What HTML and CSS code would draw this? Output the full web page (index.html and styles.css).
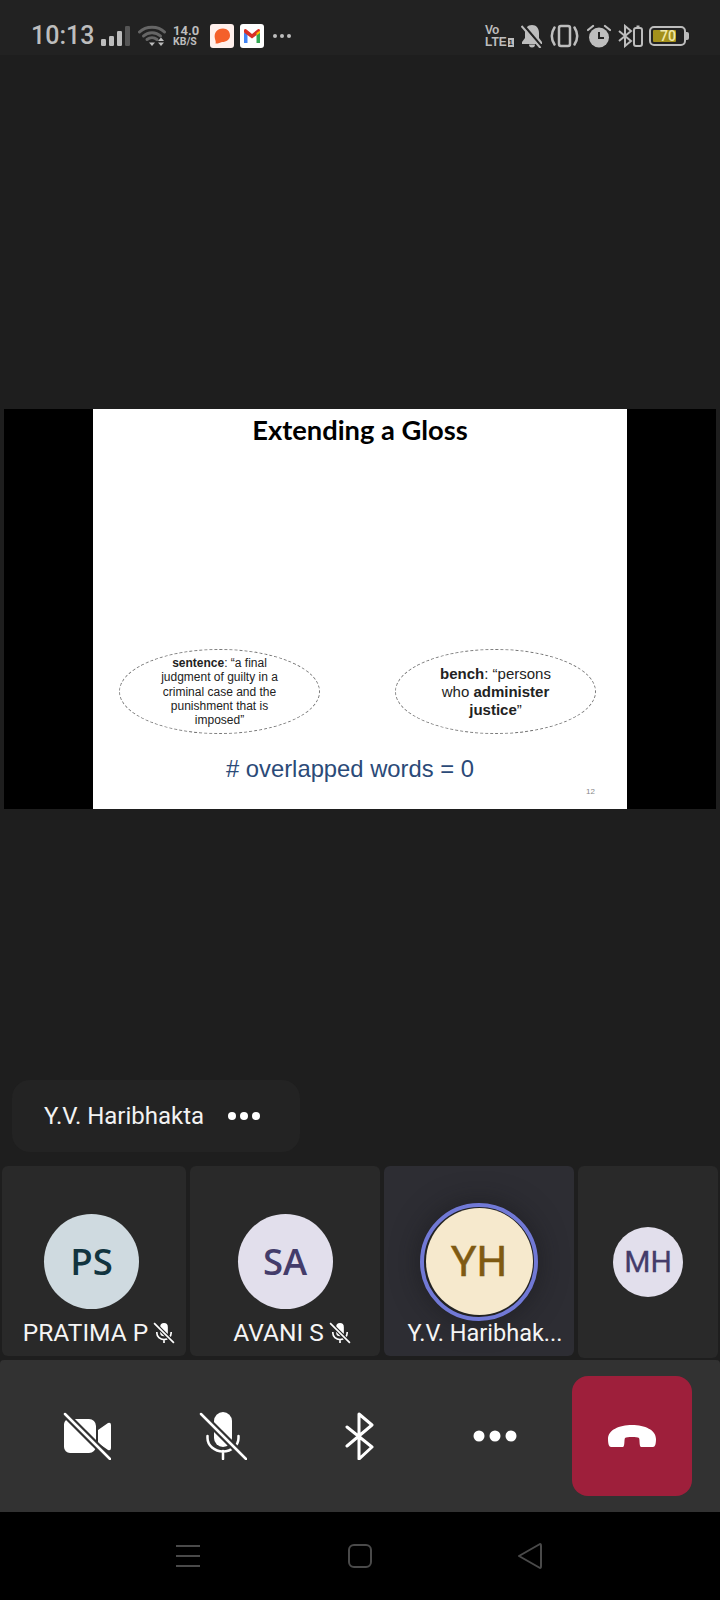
FILE: index.html
```html
<!DOCTYPE html>
<html lang="en">
<head>
<meta charset="utf-8">
<title>Meeting</title>
<link rel="stylesheet" href="styles.css">
</head>
<body>
<div class="phone">
  <header class="status">
    <div class="status-left">
      <span class="time">10:13</span>
      <svg class="signal" width="30" height="22" viewBox="0 0 30 22"><rect x="0" y="14" width="5" height="7" rx="1.2" fill="#bdbdbd"/><rect x="8" y="11" width="5" height="10" rx="1.2" fill="#bdbdbd"/><rect x="16" y="6" width="5" height="15" rx="1.2" fill="#bdbdbd"/><rect x="24" y="1" width="5" height="20" rx="1.2" fill="#555"/></svg>
      <svg class="wifi" width="29" height="22" viewBox="0 0 29 22"><g fill="none" stroke="#666" stroke-width="3" stroke-linecap="round"><path d="M1.500 7C8 .5 20 .5 26.500 7"/><path d="M5.500 11C10 6.500 18 6.500 22.500 11"/><path d="M9 14.500C12 12 16 12 19 14.500"/></g><path d="M11 17.500h6l-3 3.500z" fill="#bdbdbd"/><path d="M23 12.500l3 3.500h-6zM23 21l3-3.500h-6z" fill="#bdbdbd"/></svg>
      <div class="speed"><span class="speed-num">14.0</span><span class="speed-unit">KB/S</span></div>
      <span class="app app-peach"><svg width="24" height="24" viewBox="0 0 24 24"><path d="M13 4.500C17.500 4.500 20 7.500 20 11.500 20 15.500 16.500 18 12 18 10 18.500 7.500 20 5.500 19.500 6 18 5.500 16.500 5 15 3.500 9 7 4.500 13 4.500z" fill="#f4602a"/></svg></span>
      <span class="app"><svg width="24" height="24" viewBox="0 0 24 24"><path d="M4 9v10h3.500V9z" fill="#4285f4"/><path d="M16.500 9v10H20V9z" fill="#34a853"/><path d="M4 8.500 12 14.500 20 8.500V6.500C20 5 18.500 4.500 17.500 5.500L12 10 6.500 5.500C5.500 4.500 4 5 4 6.500z" fill="#d93025"/><path d="M16.500 9 20 6.500V9l-3.500 2.500z" fill="#fbbc04"/></svg></span>
      <span class="more-dots"><i></i><i></i><i></i></span>
    </div>
    <div class="status-right">
      <div class="volte"><span>Vo</span><span>LTE<b class="sim">1</b></span></div>
      <svg class="ic-bell" width="22" height="24" viewBox="0 0 22 24"><path d="M11 1c4.500 0 7 3.500 7 8v5l3 4v2H1v-2l3-4V9c0-4.500 2.500-8 7-8zM8 20.500h6a3 3 0 0 1-6 0z" fill="#bdbdbd"/><path d="M2 .5 21 23" stroke="#222" stroke-width="2.500"/><path d="M.5 2 19.500 24" stroke="#bdbdbd" stroke-width="2"/></svg>
      <svg class="ic-vib" width="29" height="24" viewBox="0 0 29 24"><g fill="none" stroke="#bdbdbd" stroke-width="2.500"><rect x="9" y="2" width="11" height="20" rx="2"/><path d="M4.500 3.500C1 9 1 15 4.500 20.500M24.500 3.500C28 9 28 15 24.500 20.500" stroke-linecap="round"/></g></svg>
      <svg class="ic-alarm" width="24" height="24" viewBox="0 0 24 24"><circle cx="12" cy="13.500" r="10" fill="#bdbdbd"/><path d="M12 8v6h5" fill="none" stroke="#222" stroke-width="2"/><path d="M1 6 6 2M23 6 18 2" stroke="#bdbdbd" stroke-width="2.200" stroke-linecap="round"/></svg>
      <svg class="ic-bt" width="26" height="24" viewBox="0 0 26 24"><path d="M1 7l12 10-6 5V2l6 5L1 17" fill="none" stroke="#bdbdbd" stroke-width="2"/><rect x="16" y="4" width="8" height="18" rx="2" fill="none" stroke="#bdbdbd" stroke-width="2"/><rect x="18.500" y="1.500" width="3" height="2" fill="#bdbdbd"/></svg>
      <div class="battery"><span class="batt-fill">70</span></div>
    </div>
  </header>

  <main class="stage">
    <section class="video">
      <div class="slide">
        <h1 class="slide-title">Extending a Gloss</h1>
        <div class="glosses">
          <p class="gloss gloss-small"><b>sentence</b>: “a final<br>judgment of guilty in a<br>criminal case and the<br>punishment that is<br>imposed”</p>
          <p class="gloss gloss-large"><b>bench</b>: “persons<br>who <b>administer</b><br><b>justice</b>”</p>
        </div>
        <p class="overlap"># overlapped words = 0</p>
        <span class="page-no">12</span>
      </div>
    </section>

    <div class="presenter">
      <span class="presenter-name">Y.V. Haribhakta</span>
      <span class="pill-dots"><i></i><i></i><i></i></span>
    </div>

    <section class="tiles">
      <article class="tile tile-ps">
        <div class="slot"><span class="avatar av-ps">PS</span></div>
        <div class="name">PRATIMA P <svg class="mini-mic" width="22" height="22" viewBox="0 0 20 20"><use href="#mic"/></svg></div>
      </article>
      <article class="tile tile-sa">
        <div class="slot"><span class="avatar av-sa">SA</span></div>
        <div class="name">AVANI S <svg class="mini-mic" width="22" height="22" viewBox="0 0 20 20"><use href="#mic"/></svg></div>
      </article>
      <article class="tile tile-yh">
        <div class="slot"><span class="ring"><span class="avatar av-yh">YH</span></span></div>
        <div class="name">Y.V. Haribhak...</div>
      </article>
      <article class="tile tile-mh">
        <div class="slot"><span class="avatar av-mh">MH</span></div>
      </article>
    </section>

    <nav class="controls">
      <div class="ctl-group">
        <svg class="ctl" width="48" height="48" viewBox="0 0 48 48"><path d="M6 7h20a7 7 0 0 1 7 7v20a7 7 0 0 1-7 7H7a6 6 0 0 1-6-6V12a6 6 0 0 1 5-5zM35 18l10-7q3-1 3 2v23q0 3-3 2l-10-7z" fill="#fff"/><path d="M1 1 47 47" stroke="#323232" stroke-width="7"/><path d="M2 2 47 47" stroke="#fff" stroke-width="2.500" stroke-linecap="round"/></svg>
        <svg class="ctl" width="48" height="48" viewBox="0 0 48 48"><rect x="15" y="0" width="18" height="35" rx="9" fill="#fff"/><path d="M8.500 24v2a15 13 0 0 0 31 0v-2M24 39v8" fill="none" stroke="#fff" stroke-width="2.500" stroke-linecap="round"/><path d="M1 1 47 47" stroke="#323232" stroke-width="7"/><path d="M2 2 47 47" stroke="#fff" stroke-width="2.500" stroke-linecap="round"/></svg>
        <svg class="ctl" width="48" height="48" viewBox="0 0 48 48"><path d="M12 15 37 35 24 47V2l13 11L12 34" fill="none" stroke="#fff" stroke-width="3" stroke-linecap="round" stroke-linejoin="round"/></svg>
        <svg class="ctl" width="48" height="48" viewBox="0 0 48 48"><circle cx="8" cy="24" r="5.500" fill="#fff"/><circle cx="24" cy="24" r="5.500" fill="#fff"/><circle cx="40" cy="24" r="5.500" fill="#fff"/></svg>
      </div>
      <button class="hangup" type="button" aria-label="Leave"><svg width="48" height="22" viewBox="0 0 48 22"><path d="M0 14C0 5 11 0 24 0s24 5 24 14c0 5-1 8-3 8-4 0-10 1-12 0-2-1-1-7-2-9-1-1-4-1-7-1s-6 0-7 1c-1 2 0 8-2 9-2 1-8 0-12 0-2 0-3-3-3-8z" fill="#fff"/></svg></button>
    </nav>
  </main>

  <footer class="navbar">
    <svg width="24" height="24" viewBox="0 0 24 24"><path d="M0 2h24M0 12h24M0 22h24" stroke="#4a4a4a" stroke-width="2"/></svg>
    <svg width="24" height="24" viewBox="0 0 24 24"><rect x="1" y="1" width="22" height="22" rx="5" fill="none" stroke="#4a4a4a" stroke-width="2"/></svg>
    <svg class="nav-back" width="26" height="28" viewBox="0 0 26 28"><path d="M23 2 2 14l21 12q1 0 1-2V4q0-2-1-2z" fill="none" stroke="#4a4a4a" stroke-width="2" stroke-linejoin="round"/></svg>
  </footer>

  <svg class="defs" width="0" height="0"><defs><g id="mic"><rect x="6.500" y="1" width="7" height="12" rx="3.500" fill="#fff"/><path d="M3.500 9v1a6.500 6 0 0 0 13 0V9M10 16v3" fill="none" stroke="#fff" stroke-width="1.500"/><path d="M1 1 19 19" stroke="#292929" stroke-width="3.500"/><path d="M1 1 19 19" stroke="#fff" stroke-width="1.500"/></g></defs></svg>
</div>
</body>
</html>
```
FILE: styles.css
```css
* { box-sizing: border-box; }
html, body { margin: 0; padding: 0; background: #000; }
.phone {
  width: 720px; height: 1600px; overflow: hidden;
  display: flex; flex-direction: column;
  background: #1e1e1e;
  font-family: Roboto, "Liberation Sans", sans-serif;
  color: #fff;
}

/* status bar */
.status {
  height: 55px; flex: none;
  background: #222;
  display: flex; justify-content: space-between; align-items: flex-start;
  padding: 24px 34px 0 31px;
  color: #bdbdbd;
}
.status-left, .status-right { display: flex; align-items: center; height: 24px; }
.time { font-size: 25px; line-height: 24px; font-weight: 500; width: 70px; }
.signal { margin-right: 7px; }
.wifi { margin-right: 6px; }
.speed { display: flex; flex-direction: column; width: 37px; font-weight: 700; line-height: 11px; }
.speed-num { font-size: 13px; }
.speed-unit { font-size: 10.500px; }
.app { width: 24px; height: 24px; background: #fff; border-radius: 3px; display: block; margin-right: 6px; }
.app svg { display: block; }
.app-peach { background: #fff0ec; }
.more-dots { display: flex; gap: 3px; margin-left: 3px; }
.more-dots i { width: 4px; height: 4px; border-radius: 50%; background: #bdbdbd; }
.volte { display: flex; flex-direction: column; font-size: 12px; line-height: 12px; font-weight: 700; width: 36px; }
.volte span { font-family: "Liberation Sans", sans-serif; display: flex; align-items: center; }
.sim { font-size: 7px; line-height: 9px; background: #bdbdbd; color: #222; padding: 0 1px; margin-left: 1px; }
.ic-bell { margin-right: 7px; }
.ic-vib { margin-right: 8px; }
.ic-alarm { margin-right: 7px; }
.ic-bt { margin-right: 5px; }
.battery {
  width: 37px; height: 20px; border: 2px solid #bdbdbd; border-radius: 5px;
  padding: 2px; position: relative;
}
.battery::after {
  content: ""; position: absolute; right: -5px; top: 4px;
  width: 3px; height: 8px; background: #bdbdbd; border-radius: 0 2px 2px 0;
}
.batt-fill {
  display: block; width: 23px; height: 12px; background: #a3901c;
  font-size: 14px; line-height: 12px; font-weight: 500; text-align: right; color: #f1e8a8;
  border-radius: 1px;
}

/* stage */
.stage { flex: 1; display: flex; flex-direction: column; min-height: 0; }
.video {
  margin: 354px 4px 0; height: 400px; background: #000;
  display: flex; justify-content: center; flex: none;
}
.slide {
  width: 534px; height: 400px; background: #fff; color: #000;
  position: relative;
  display: flex; flex-direction: column; align-items: center;
  font-family: "Liberation Sans", Arial, sans-serif;
}
.slide-title {
  margin: 4px 0 0; font-family: Lato, sans-serif; font-weight: 700;
  font-size: 27.300px; line-height: 34px; height: 236px; color: #000;
}
.glosses { width: 100%; display: flex; gap: 75px; padding-left: 26px; }
.gloss {
  margin: 0; width: 201px; height: 85px; flex: none;
  border: 1px dashed #777; border-radius: 50%;
  text-align: center;
}
.gloss-small { font-size: 12px; line-height: 14.300px; padding-top: 6px; color: #222; }
.gloss-large { font-size: 15px; line-height: 18px; padding-top: 15px; color: #222; }
.overlap { margin: 20px 20px 0 0; font-size: 23.800px; line-height: 30px; color: #2b4a78; }
.page-no { position: absolute; right: 32px; top: 378px; font-size: 8px; color: #888; }

.presenter {
  margin: 271px 0 0 12px; width: 288px; height: 72px; flex: none;
  background: #232323; border-radius: 18px;
  display: flex; align-items: center; padding-left: 32px;
}
.presenter-name { font-size: 24px; color: #f2f2f2; }
.pill-dots { display: flex; gap: 4px; margin-left: 24px; }
.pill-dots i { width: 8px; height: 8px; border-radius: 50%; background: #fff; }

.tiles { display: flex; gap: 4px; padding-left: 2px; margin-top: 14px; flex: none; align-items: flex-start; }
.tile {
  height: 190px; background: #292929; border-radius: 6px;
  display: flex; flex-direction: column; align-items: center;
}
.tile-ps { width: 184px; }
.tile-ps .slot { padding-right: 5px; }
.tile-ps .name { margin-left: 10px; }
.tile-sa { width: 190px; }
.tile-sa .name { margin-left: 14px; }
.tile-yh { width: 190px; background: #2d2d33; }
.tile-mh { width: 140px; height: 192px; }
.slot { height: 155px; padding-top: 36px; display: flex; align-items: center; justify-content: center; width: 100%; flex: none; }
.avatar {
  width: 95px; height: 95px; border-radius: 50%; flex: none;
  display: flex; align-items: center; justify-content: center;
  font-family: "Open Sans", sans-serif; font-size: 36.500px; font-weight: 600; line-height: 1;
}
.av-ps { background: #cfdae0; color: #12343f; }
.av-sa { background: #e2dfec; color: #443c6a; }
.ring {
  width: 118px; height: 118px; border-radius: 50%; flex: none;
  border: 4px solid #7179d6; display: flex; align-items: center; justify-content: center;
  background: #222; box-shadow: 0 0 28px rgba(20,20,24,.55);
}
.av-yh { width: 107px; height: 107px; background: #f6e9cd; color: #7f5a12; font-family: Roboto, sans-serif; font-size: 43px; font-weight: 400; -webkit-text-stroke: .5px #7f5a12; }
.av-mh { width: 70px; height: 70px; background: #e2dfec; color: #443c6a; font-family: Roboto, sans-serif; font-size: 30px; font-weight: 400; -webkit-text-stroke: .3px #443c6a; }
.name {
  font-size: 24.500px; line-height: 26px; color: #f5f5f5; white-space: nowrap;
  display: flex; align-items: center; gap: 5px; margin-top: -1px;
}
.tile-yh .name { font-size: 23.500px; margin-left: 12px; }
.mini-mic { flex: none; }

.controls {
  margin-top: 2px; height: 152px; flex: none; background: #323232;
  border-radius: 4px 4px 0 0;
  display: flex; align-items: center; justify-content: space-between; padding: 0 28px 0 63px;
}
.ctl-group { display: flex; gap: 88px; align-items: center; }
.ctl { flex: none; display: block; }
.hangup {
  width: 120px; height: 120px; flex: none; border: 0; padding: 0;
  background: #9e1f3b; border-radius: 16px;
  display: flex; align-items: center; justify-content: center;
}
.navbar {
  height: 88px; flex: none; background: #000;
  display: flex; align-items: center; padding: 0 0 0 176px; gap: 148px;
}
.nav-back { margin-left: -3px; }
.defs { position: absolute; }
```
